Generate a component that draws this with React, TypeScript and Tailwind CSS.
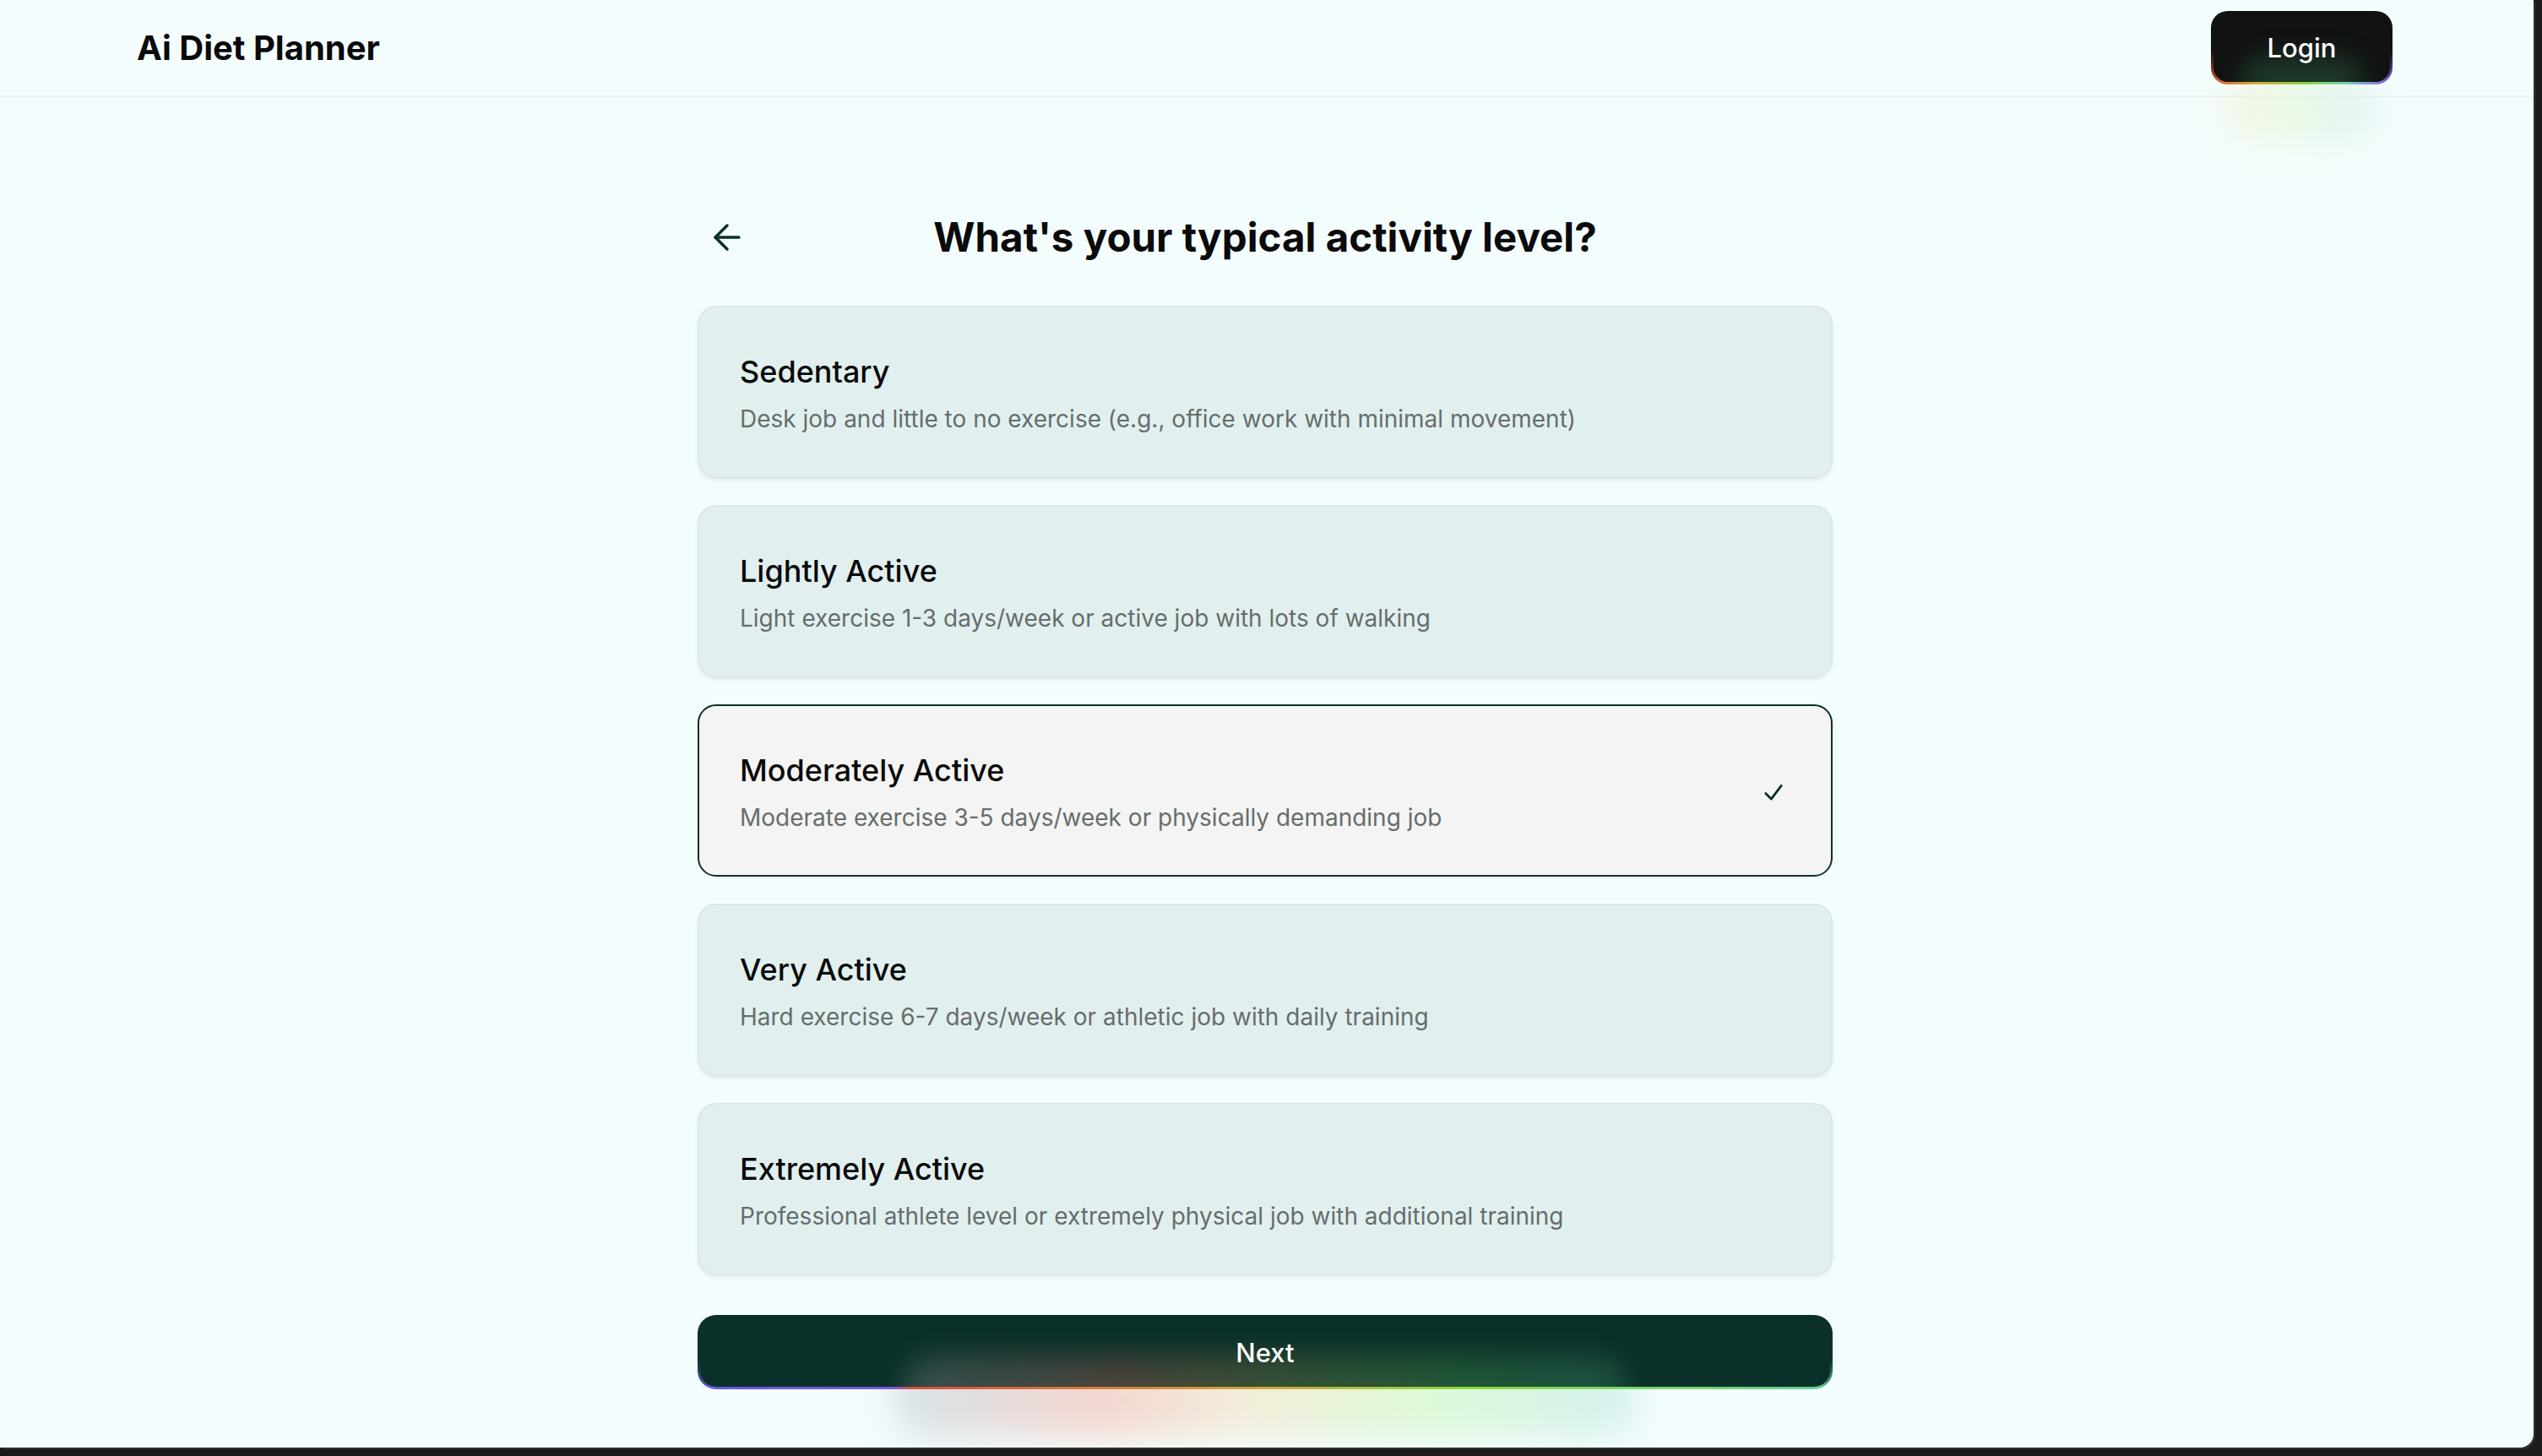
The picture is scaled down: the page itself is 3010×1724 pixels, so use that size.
import React from "react";
import { ArrowLeft } from "lucide-react";

const options = [
  {
    title: "Sedentary",
    desc: "Desk job and little to no exercise (e.g., office work with minimal movement)",
  },
  {
    title: "Lightly Active",
    desc: "Light exercise 1-3 days/week or active job with lots of walking",
  },
  {
    title: "Moderately Active",
    desc: "Moderate exercise 3-5 days/week or physically demanding job",
  },
  {
    title: "Very Active",
    desc: "Hard exercise 6-7 days/week or athletic job with daily training",
  },
  {
    title: "Extremely Active",
    desc: "Professional athlete level or extremely physical job with additional training",
  },
];

function CheckMark() {
  return (
    <svg width="26" height="26" viewBox="0 0 24 24" fill="none" className="mr-[8px] shrink-0">
      <path
        d="M3.5 12.5 L9.5 18.5 L20.5 4"
        stroke="#0b3029"
        strokeWidth="2.6"
        strokeLinecap="round"
        strokeLinejoin="round"
      />
    </svg>
  );
}

function LoginButton() {
  return (
    <div className="relative">
      <div className="pointer-events-none absolute left-[8%] right-[8%] top-[85%] h-[80px] rounded-full bg-[linear-gradient(90deg,#f3e6c8,#e8f7c8,#d4f0dc,#d6e8ec)] opacity-50 blur-[20px]" />
      <button className="relative isolate flex h-[87px] w-[215px] items-center justify-center overflow-hidden rounded-[20px] border-[3px] border-transparent bg-[linear-gradient(#111212,#111212),linear-gradient(#111212_55%,rgba(17,18,18,0.4)_85%,rgba(17,18,18,0)),linear-gradient(90deg,#f0603a,#e3b23c,#8fe03f,#7fd8c0,#8a5cf5)] [background-clip:padding-box,border-box,border-box] [background-origin:border-box]">
        <div className="pointer-events-none absolute left-[15%] right-[15%] bottom-[-30px] h-[60px] rounded-full bg-[#2f6a44] opacity-45 blur-[16px]" />
        <span className="relative text-[31px] font-medium leading-none text-white">Login</span>
      </button>
    </div>
  );
}

function NextButton() {
  return (
    <div className="relative mt-[47px]">
      <div className="pointer-events-none absolute left-[17%] right-[17%] top-[62%] h-[90px] rounded-full bg-[linear-gradient(90deg,#a9bccb,#f39a8a_28%,#f0d6a6_48%,#b9f3a0_72%,#a9dcdc)] opacity-40 blur-[20px]" />
      <button className="relative isolate flex h-[88px] w-full items-center justify-center overflow-hidden rounded-[22px] border-[3px] border-transparent bg-[linear-gradient(#0b3029,#0b3029),linear-gradient(#0b3029_60%,rgba(11,48,41,0.4)_88%,rgba(11,48,41,0)),linear-gradient(90deg,#6b5cf0_0%,#7a5ce8_17%,#e8503f_19%,#e0843c_35%,#d8b03a_50%,#93e43f_68%,#7ee06a_85%,#6fd8a8_100%)] [background-clip:padding-box,border-box,border-box] [background-origin:border-box]">
        <div className="pointer-events-none absolute left-[18%] right-[18%] bottom-[-34px] h-[70px] rounded-full bg-[linear-gradient(90deg,#7f8a8f,#c06a60_30%,#8a8a50_50%,#4fa050_75%,#3e8a70)] opacity-35 blur-[16px]" />
        <span className="relative text-[31px] font-medium leading-none text-white">Next</span>
      </button>
    </div>
  );
}

export default function App() {
  const selected = 2;
  return (
    <div className="h-[1724px] w-[3010px] bg-[#1b1b1b] font-['Inter','Noto_Sans',sans-serif]">
      <div className="flex h-[1714px] w-[3000px] flex-col overflow-hidden rounded-br-[16px] bg-[#f4fdfd] shadow-[2px_2px_0_0_#2f3232]">
        <header className="flex h-[115px] shrink-0 items-center justify-between border-b-2 border-[#eaf1f1] pl-[162px] pr-[167px]">
          <h1 className="text-[40px] font-bold leading-none text-[#0a0a0a]">Ai Diet Planner</h1>
          <LoginButton />
        </header>

        <main className="ml-[826px] flex w-[1344px] flex-col pt-[137px]">
          <div className="grid h-[58px] grid-cols-[1fr_auto_1fr] items-center">
            <div className="flex items-center pl-[11px]">
              <ArrowLeft size={48} strokeWidth={1.75} color="#0b3029" />
            </div>
            <h2 className="text-[47.5px] font-bold leading-[58px] text-[#0a0a0a]">
              What's your typical activity level?
            </h2>
            <div />
          </div>

          <div className="mt-[52px] flex flex-col gap-[32px]">
            {options.map((o, i) => {
              const isSel = i === selected;
              return (
                <div
                  key={o.title}
                  className={
                    isSel
                      ? "flex h-[204px] items-center justify-between rounded-[22px] border-2 border-[#0b3029] bg-[#f3f4f3] pl-[48px] pr-[47px] pt-[6px]"
                      : "flex h-[204px] items-center justify-between rounded-[22px] border-2 border-[#dde6e5] bg-[#e1f0ef] pl-[48px] pr-[47px] pt-[6px] shadow-[0_3px_4px_rgba(0,0,0,0.07)]"
                  }
                >
                  <div className="flex flex-col gap-[10px]">
                    <div className="text-[36px] font-medium leading-[49px] text-[#0a0a0a]">{o.title}</div>
                    <div className="text-[28px] leading-[43px] text-[#676d6c]">{o.desc}</div>
                  </div>
                  {isSel && <CheckMark />}
                </div>
              );
            })}
          </div>

          <NextButton />
        </main>
      </div>
    </div>
  );
}
